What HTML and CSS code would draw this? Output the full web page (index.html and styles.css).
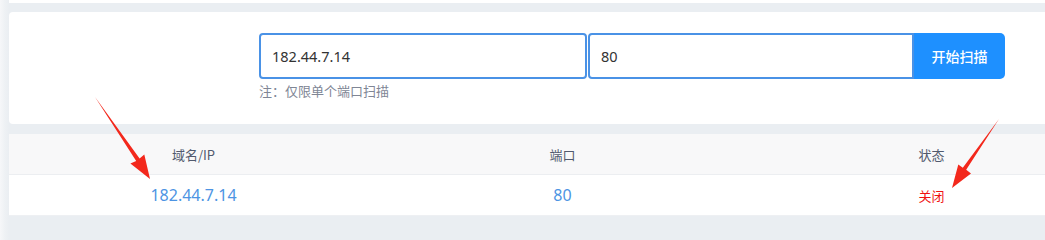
FILE: index.html
```html
<!DOCTYPE html>
<html lang="zh">
<head>
<meta charset="utf-8">
<title>端口扫描</title>
<link rel="stylesheet" href="styles.css">
</head>
<body>
<div class="content">
  <div class="top-strip"></div>
  <div class="card">
    <div class="scan-form">
      <div class="fields">
        <input class="input host" type="text" value="182.44.7.14">
        <input class="input port" type="text" value="80">
        <button class="btn" type="button">开始扫描</button>
      </div>
      <div class="note">注：仅限单个端口扫描</div>
    </div>
  </div>
  <div class="table">
    <div class="row head">
      <div class="cell">域名/IP</div>
      <div class="cell">端口</div>
      <div class="cell">状态</div>
    </div>
    <div class="row body">
      <div class="cell link">182.44.7.14</div>
      <div class="cell link">80</div>
      <div class="cell closed">关闭</div>
    </div>
  </div>
</div>
<svg class="arrows" width="1045" height="226" viewBox="0 0 1045 226" xmlns="http://www.w3.org/2000/svg">
  <polygon fill="#f3281c" points="95,97 139.6,158.4 144.3,154.6 150,179 130.4,163.4 136.2,160.9"/>
  <polygon fill="#f3281c" points="999,119 966.2,169.7 971,173.4 952,188 958.3,164.6 962.8,167.8"/>
</svg>
</body>
</html>
```
FILE: styles.css
```css
html, body {
  margin: 0;
  padding: 0;
}
body {
  width: 1045px;
  height: 226px;
  overflow: hidden;
  position: relative;
  background: linear-gradient(to right, #f6f7f9 0, #eef1f4 5px, #eaeef2 9px);
  font-family: "Noto Sans", "Noto Sans CJK SC", sans-serif;
  color: #515a6e;
}
.content {
  margin-left: 9px;
  width: 1036px;
  overflow: hidden;
}
.top-strip {
  height: 3px;
  background: #fff;
}
.card {
  margin-top: 9px;
  height: 112px;
  background: #fff;
  border-radius: 4px 0 0 4px;
  box-sizing: border-box;
  padding: 21px 0 0 250px;
}
.fields {
  display: flex;
  height: 46px;
}
.input {
  box-sizing: border-box;
  height: 46px;
  border: 2px solid #4a92e6;
  background: #fff;
  font-family: "Noto Sans", "Noto Sans CJK SC", sans-serif;
  font-size: 14.5px;
  color: #333;
  padding: 0 11px;
  outline: none;
  margin: 0;
}
.host {
  width: 328px;
  border-radius: 4px;
  margin-right: 1px;
}
.port {
  width: 326px;
  border-radius: 4px 0 0 4px;
}
.btn {
  width: 91px;
  height: 46px;
  border: none;
  margin: 0;
  background: #1e90ff;
  color: #fff;
  border-radius: 0 5px 5px 0;
  font-family: "Noto Sans CJK SC", sans-serif;
  font-size: 14px;
  font-weight: 500;
  padding: 0;
}
.note {
  margin-top: 3px;
  font-family: "Noto Sans CJK SC", sans-serif;
  font-size: 13px;
  line-height: 18px;
  color: #808695;
}
.table {
  margin-top: 10px;
  background: #fff;
  overflow: hidden;
}
.row {
  display: grid;
  grid-template-columns: 369px 369px 369px;
  height: 40px;
  align-items: center;
  text-align: center;
}
.head {
  background: #f8f8f9;
  border-bottom: 1px solid #eceef1;
  font-family: "Noto Sans CJK SC", sans-serif;
  font-size: 13px;
  color: #515a6e;
}
.body {
  height: 40px;
  border-bottom: 1px solid #eef0f3;
}
.link {
  font-size: 16px;
  color: #4d94e3;
}
.closed {
  font-family: "Noto Sans CJK SC", sans-serif;
  font-size: 13px;
  color: #f01010;
}
.arrows {
  position: absolute;
  left: 0;
  top: 0;
}
```
